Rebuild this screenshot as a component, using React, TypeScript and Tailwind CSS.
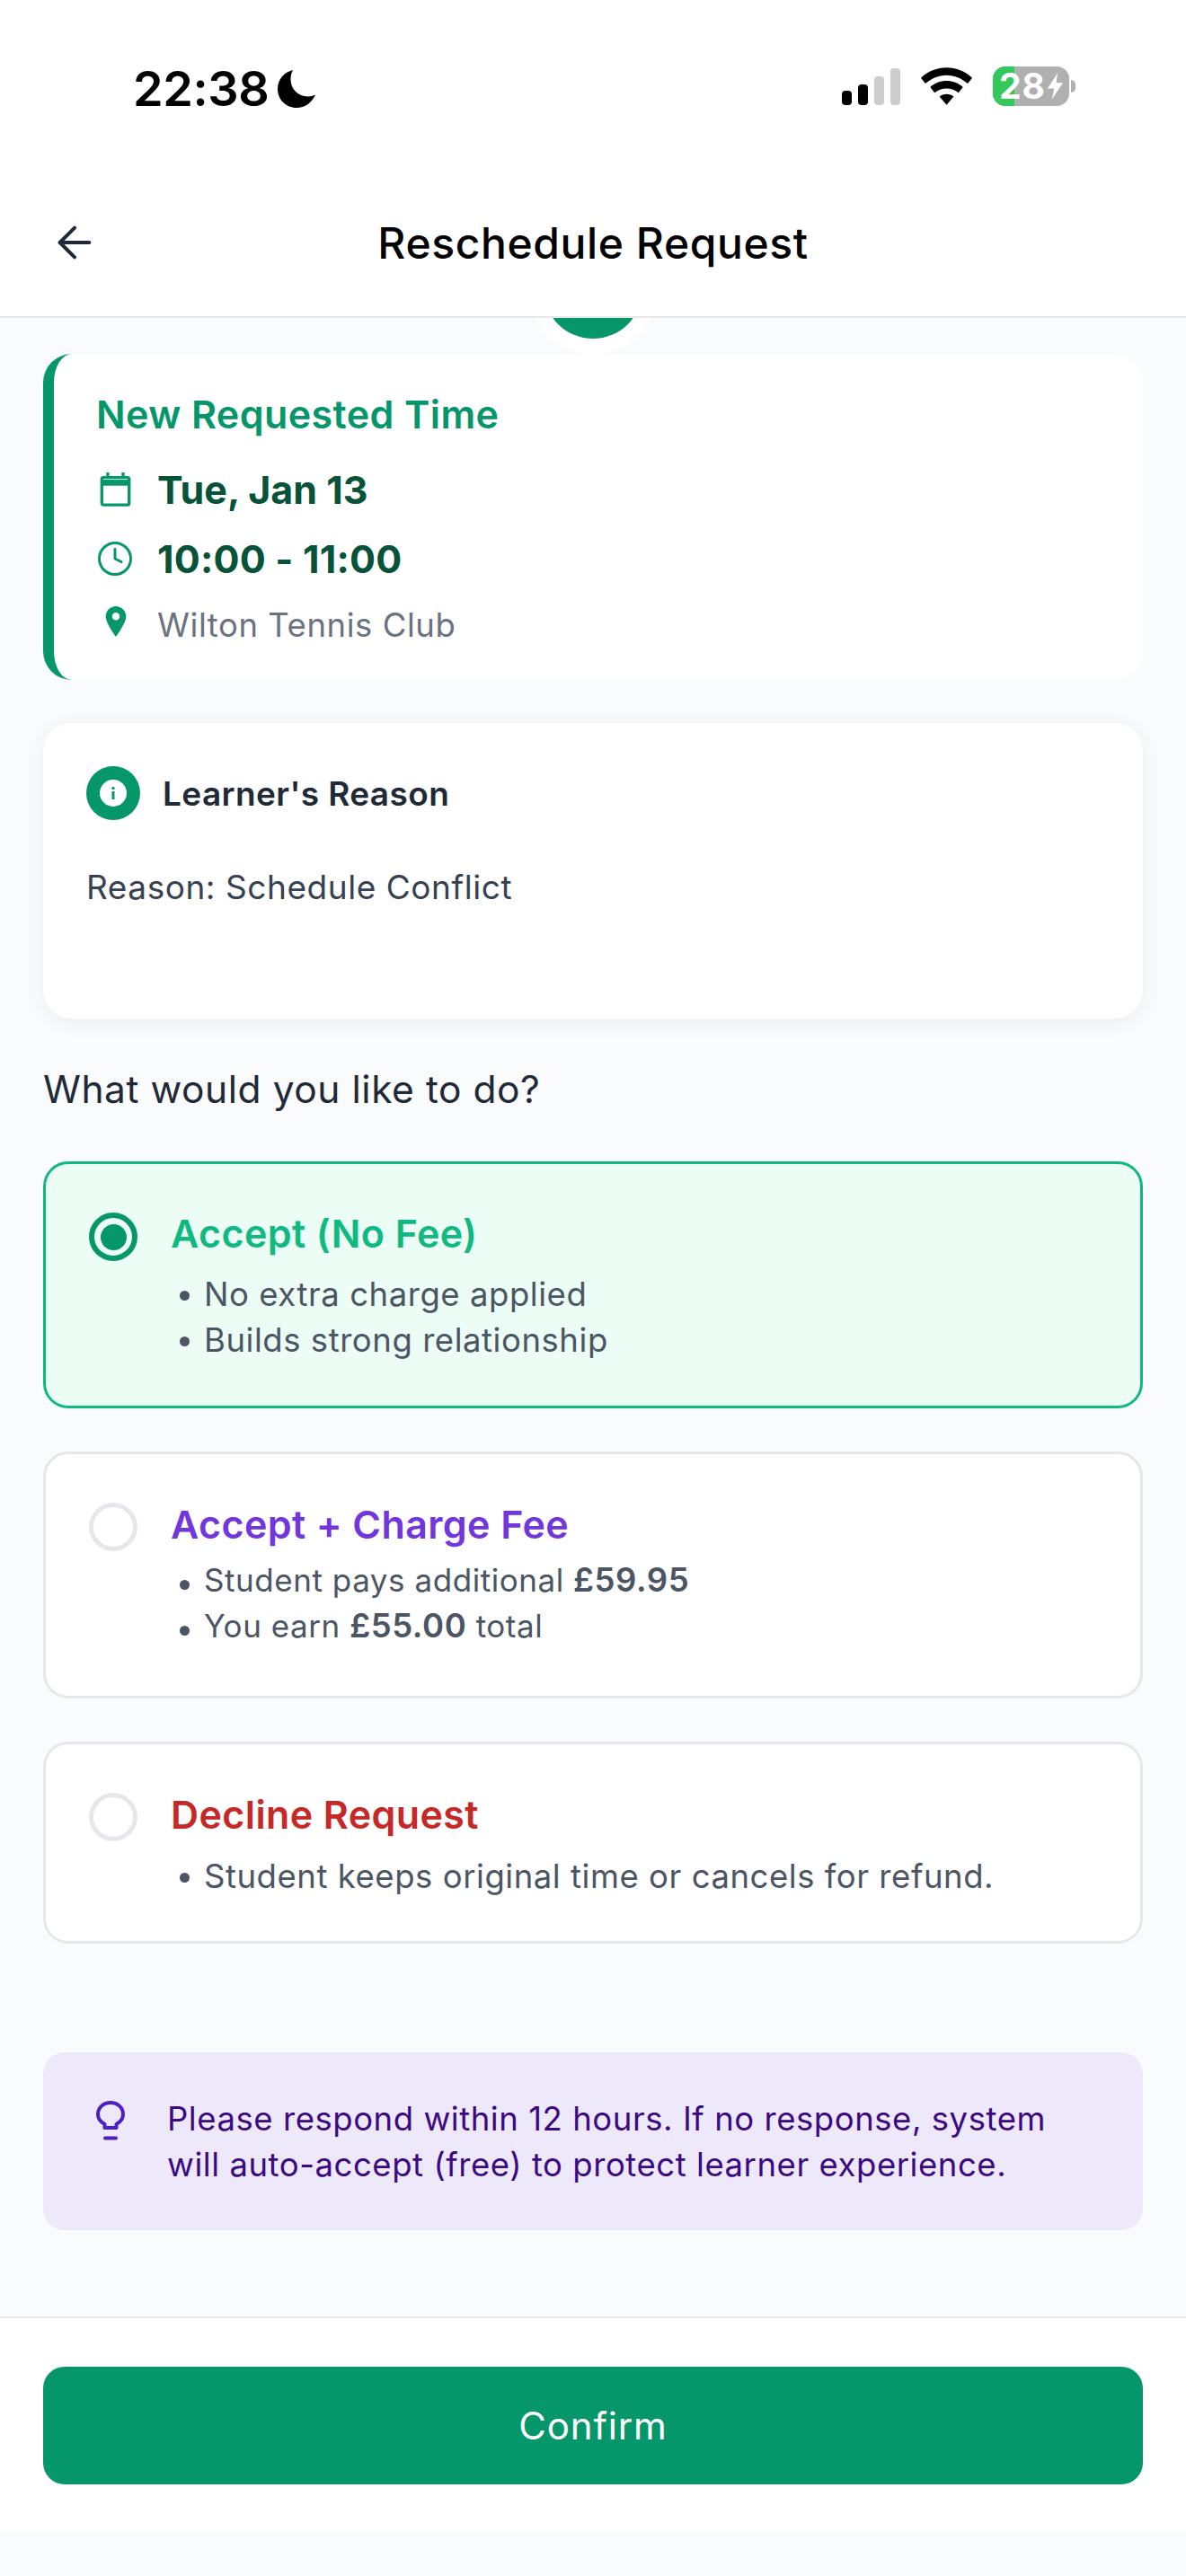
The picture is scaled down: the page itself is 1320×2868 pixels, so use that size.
import React from 'react';
import { ArrowLeft, Clock } from 'lucide-react';

const Radio = ({ selected }: { selected?: boolean }) =>
  selected ? (
    <div className="mt-[2px] flex h-[54px] w-[54px] shrink-0 items-center justify-center rounded-full border-[6px] border-[#059669]">
      <div className="h-[29px] w-[29px] rounded-full bg-[#059669]" />
    </div>
  ) : (
    <div className="mt-[1px] h-[54px] w-[54px] shrink-0 rounded-full border-[5px] border-[#e5e7eb]" />
  );

const Bullet = ({ children, low }: { children: React.ReactNode; low?: boolean }) => (
  <li className={`flex h-[51px] items-center tracking-[0.55px] text-[#4b5563] ${low ? 'text-[35px]' : 'text-[36.5px]'}`}>
    <span className={`mr-[16px] ml-[10px] h-[11px] w-[11px] shrink-0 rounded-full bg-[#4b5563] ${low ? 'mt-[9px]' : 'mt-[1px]'}`} />
    <span>{children}</span>
  </li>
);

export default function App() {
  return (
    <div className="flex h-[2868px] w-[1320px] flex-col overflow-hidden bg-[#fafbfd] font-['Inter',sans-serif]">
      {/* Status bar + header */}
      <header className="relative z-10 h-[354px] shrink-0 border-b-2 border-[#e5e7eb] bg-white">
        <div className="flex h-[192px] items-start justify-between pt-[70px] pr-[123px] pl-[148px]">
          <div className="flex items-center gap-[10px]">
            <span className="text-[54px] leading-[58px] font-semibold tracking-[-0.4px] text-black">22:38</span>
            <svg viewBox="0 0 42 42" className="h-[42px] w-[42px]" fill="#000">
              <path d="M17 0C7 2.500 0 10.500 0 21c0 12 9.500 21 21 21 9.500 0 17.500-6 21-14.500-2.500 1.300-5.500 2-8.500 2C23 29.500 14.500 21 14.500 10.500 14.500 6.800 15.300 3.200 17 0z" />
            </svg>
          </div>
          <div className="flex items-start gap-[23px]">
            <svg viewBox="0 0 65 41" className="mt-[6px] h-[41px] w-[65px]">
              <rect x="0" y="25" width="11" height="16" rx="4" fill="#000" />
              <rect x="18" y="18" width="11" height="23" rx="4" fill="#000" />
              <rect x="36" y="9" width="11" height="32" rx="4" fill="#ccc" />
              <rect x="54" y="0" width="11" height="41" rx="4" fill="#ccc" />
            </svg>
            <svg viewBox="0 0 58 42" className="mt-[5px] h-[42px] w-[57px]" fill="#000">
              <path d="M29 0c11 0 21 4.200 29 11.500l-5 6.500C46 12 38 8.500 29 8.500S12 12 5 18L0 11.500C8 4.200 18 0 29 0z" />
              <path d="M29 15c7 0 13.500 2.500 18.500 7l-5 6.500c-3.700-3.200-8.500-5-13.500-5s-9.800 1.800-13.500 5l-5-6.500c5-4.500 11.500-7 18.500-7z" />
              <path d="M29 30c3 0 5.800 1 8 2.800L29 42l-8-9.200c2.200-1.800 5-2.800 8-2.800z" />
            </svg>
            <div className="flex items-center gap-[2px]">
              <div className="relative mt-[4px] flex h-[44px] w-[85px] items-center rounded-[14px] bg-[#b0b0b0] pl-[7px]">
                <div className="absolute inset-y-0 left-0 w-[24px] rounded-l-[14px] bg-[#34c759]" />
                <span className="relative flex items-center text-[39px] leading-[44px] font-bold tracking-[1px] text-white">
                  28
                  <svg viewBox="0 0 14 24" className="ml-[2px] h-[30px] w-[17px]" fill="#fff">
                    <path d="M9 0 0 14h6l-2 10 10-15H8z" />
                  </svg>
                </span>
              </div>
              <div className="mt-[4px] h-[14px] w-[5px] rounded-r-full bg-[#b0b0b0]" />
            </div>
          </div>
        </div>
        <div className="relative flex h-[160px] items-start justify-center pt-[50px]">
          <ArrowLeft className="absolute top-[50px] left-[55px] h-[56px] w-[56px] text-[#1f2937]" strokeWidth={1.7} />
          <h1 className="text-[48px] leading-[58px] font-medium tracking-[0.6px] text-black">Reschedule Request</h1>
        </div>
      </header>

      <main className="relative flex flex-1 flex-col px-[48px]">
        {/* Avatar peeking out behind the header */}
        <div className="absolute -top-[104px] left-[588px] flex h-[144px] w-[144px] items-center justify-center rounded-full bg-white">
          <div className="h-[110px] w-[110px] rounded-full bg-[#059669]" />
        </div>

        {/* New time card */}
        <section className="relative mt-[40px] h-[363px] rounded-[32px] border-l-[12px] border-[#059669] bg-white pt-[42px] pl-[47px]">
          <h2 className="text-[43px] leading-[50px] font-semibold tracking-[0.4px] text-[#059669]">New Requested Time</h2>
          <div className="mt-[30px] flex h-[58px] items-center gap-[29px]">
            <svg viewBox="0 0 36 40" className="ml-[4px] h-[38px] w-[35px]" fill="none" stroke="#059669" strokeWidth="3.500">
              <rect x="2" y="6" width="32" height="32" rx="2" />
              <path d="M2 12h32" strokeWidth="7" />
              <path d="M9 0v6M27 0v6" />
            </svg>
            <span className="text-[43px] leading-[58px] font-bold text-[#065339]">Tue, Jan 13</span>
          </div>
          <div className="mt-[19px] flex h-[58px] items-center gap-[26px]">
            <Clock className="h-[42px] w-[42px] text-[#059669]" strokeWidth={1.7} />
            <span className="text-[43px] leading-[58px] font-bold tracking-[0.2px] text-[#065339]">10:00 - 11:00</span>
          </div>
          <div className="mt-[16px] flex h-[58px] items-center gap-[34px]">
            <svg viewBox="0 0 24 36" className="mb-[8px] ml-[10px] h-[34px] w-[24px]" fill="#059669">
              <path fillRule="evenodd" d="M12 0C5.400 0 0 5.300 0 12c0 8 12 24 12 24s12-16 12-24C24 5.300 18.600 0 12 0zm0 16.500a4.500 4.500 0 1 1 0-9 4.500 4.500 0 0 1 0 9z" />
            </svg>
            <span className="text-[36.5px] tracking-[0.55px] text-[#6b7280]">Wilton Tennis Club</span>
          </div>
        </section>

        {/* Reason card */}
        <section className="mt-[48px] h-[329px] rounded-[32px] bg-white px-[48px] pt-[48px] shadow-[0_4px_24px_rgba(17,24,39,0.06)]">
          <div className="flex items-center gap-[25px]">
            <div className="flex h-[60px] w-[60px] items-center justify-center rounded-full bg-[#059669]">
              <svg viewBox="0 0 30 30" className="h-[30px] w-[30px]">
                <circle cx="15" cy="15" r="15" fill="#fff" />
                <rect x="13.500" y="13" width="3" height="9" fill="#059669" />
                <circle cx="15" cy="9.500" r="1.700" fill="#059669" />
              </svg>
            </div>
            <span className="pt-[2px] text-[37px] font-semibold tracking-[0.4px] text-[#1f2937]">Learner's Reason</span>
          </div>
          <p className="mt-[52px] text-[37px] leading-[46px] tracking-[0.55px] text-[#374151]">Reason: Schedule Conflict</p>
        </section>

        <p className="mt-[54px] text-[42.5px] leading-[50px] tracking-[0.55px] text-[#1f2937]">What would you like to do?</p>

        {/* Options */}
        <section className="mt-[55px] flex h-[275px] gap-[37px] rounded-[28px] border-[3px] border-[#10b981] bg-[#ecfdf5] pt-[52px] pl-[48px]">
          <Radio selected />
          <div>
            <h3 className="text-[43px] leading-[50px] font-semibold tracking-[0.4px] text-[#10b981]">Accept (No Fee)</h3>
            <ul className="mt-[18px]">
              <Bullet>No extra charge applied</Bullet>
              <Bullet>Builds strong relationship</Bullet>
            </ul>
          </div>
        </section>

        <section className="mt-[48px] flex h-[275px] gap-[37px] rounded-[28px] border-[3px] border-[#e5e7eb] bg-white pt-[53px] pl-[48px]">
          <Radio />
          <div>
            <h3 className="text-[43px] leading-[50px] font-semibold tracking-[0.4px] text-[#7236dd]">Accept + Charge Fee</h3>
            <ul className="mt-[12px]">
              <Bullet low>
                Student pays additional <strong className="text-[36.5px] font-semibold">£59.95</strong>
              </Bullet>
              <Bullet low>
                You earn <strong className="text-[36.5px] font-semibold">£55.00</strong> total
              </Bullet>
            </ul>
          </div>
        </section>

        <section className="mt-[48px] flex h-[225px] gap-[37px] rounded-[28px] border-[3px] border-[#e5e7eb] bg-white pt-[53px] pl-[48px]">
          <Radio />
          <div>
            <h3 className="text-[43px] leading-[50px] font-semibold tracking-[0.4px] text-[#c62828]">Decline Request</h3>
            <ul className="mt-[19px]">
              <Bullet>Student keeps original time or cancels for refund.</Bullet>
            </ul>
          </div>
        </section>

        {/* Tip */}
        <section className="mt-[121px] flex h-[198px] gap-[47px] rounded-[24px] bg-[#eee8fb] pt-[49px] pl-[59px]">
          <svg viewBox="0 0 32 44" className="mt-[5px] h-[44px] w-[32px] shrink-0" fill="none" stroke="#4c1fc4" strokeWidth="4">
            <path d="M9.500 30v-4C5 23.500 2 19.500 2 15 2 7.300 8.300 2 16 2s14 5.300 14 13c0 4.500-3 8.500-7.500 11v4z" strokeLinejoin="round" />
            <path d="M10 41.500h12" strokeLinecap="round" />
          </svg>
          <p className="text-[36.5px] leading-[51px] tracking-[0.55px] text-[#3b0a82]">
            Please respond within 12 hours. If no response, system
            <br />
            will auto-accept (free) to protect learner experience.
          </p>
        </section>
      </main>

      <footer className="mt-auto mb-[49px] flex h-[240px] shrink-0 items-start border-t-2 border-[#e5e7eb] bg-white px-[48px] pt-[54px]">
        <button className="h-[131px] w-full rounded-[24px] bg-[#059669] text-[42px] font-normal tracking-[0.8px] text-white">
          Confirm
        </button>
      </footer>
    </div>
  );
}
